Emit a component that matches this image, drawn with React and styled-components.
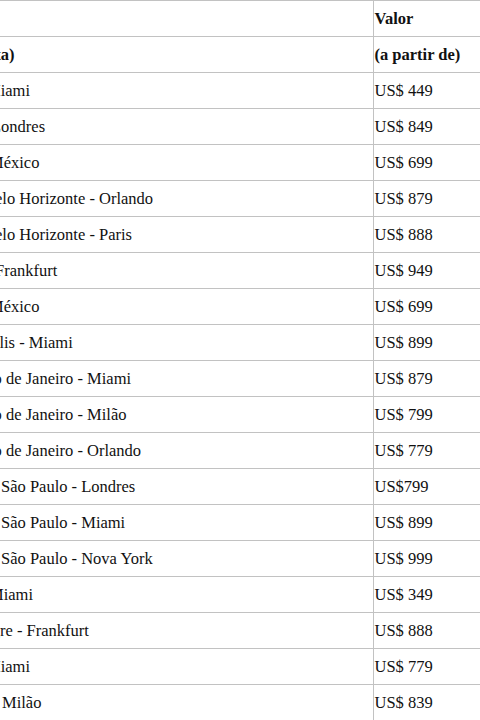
import styled, { createGlobalStyle } from "styled-components";

const GlobalStyle = createGlobalStyle`
  html, body {
    margin: 0;
    padding: 0;
    background: #ffffff;
    font-family: "Liberation Serif", "Times New Roman", serif;
  }
`;

const rows = [
  { route: "Miami", cut: -15, price: "US$ 449" },
  { route: "Londres", cut: -10, price: "US$ 849" },
  { route: "México", cut: -12, price: "US$ 699" },
  { route: "Belo Horizonte - Orlando", cut: -17, price: "US$ 879" },
  { route: "Belo Horizonte - Paris", cut: -17, price: "US$ 888" },
  { route: "Frankfurt", cut: -6, price: "US$ 949" },
  { route: "México", cut: -12, price: "US$ 699" },
  { route: "Florianópolis - Miami", cut: -74, price: "US$ 899" },
  { route: "Rio de Janeiro - Miami", cut: -23, price: "US$ 879" },
  { route: "Rio de Janeiro - Milão", cut: -23, price: "US$ 799" },
  { route: "Rio de Janeiro - Orlando", cut: -23, price: "US$ 779" },
  { route: "São Paulo - Londres", cut: 0, price: "US$799" },
  { route: "São Paulo - Miami", cut: 0, price: "US$ 899" },
  { route: "São Paulo - Nova York", cut: 0, price: "US$ 999" },
  { route: "Miami", cut: -12, price: "US$ 349" },
  { route: "Porto Alegre - Frankfurt", cut: -72, price: "US$ 888" },
  { route: "Miami", cut: -15, price: "US$ 779" },
  { route: "Milão", cut: 1, price: "US$ 839" },
];

export default function App() {
  return (
    <>
      <GlobalStyle />
      <Viewport>
        <Table>
          <colgroup>
            <col style={{ width: 373 }} />
            <col style={{ width: 200 }} />
          </colgroup>
          <tbody>
            <tr>
              <Cell />
              <Cell bold>Valor</Cell>
            </tr>
            <tr>
              <Cell bold cut={-70}>(ida e volta)</Cell>
              <Cell bold>(a partir de)</Cell>
            </tr>
            {rows.map((r, i) => (
              <tr key={i}>
                <Cell cut={r.cut}>{r.route}</Cell>
                <Cell>{r.price}</Cell>
              </tr>
            ))}
          </tbody>
        </Table>
      </Viewport>
    </>
  );
}

const Viewport = styled.div`
  width: 480px;
  height: 720px;
  overflow: hidden;
  background: #fff;
`;

const Table = styled.table`
  border-collapse: collapse;
  table-layout: fixed;
  width: 573px;
  color: #111;
`;

const Cell = styled.td`
  box-sizing: border-box;
  height: 36px;
  padding: 1px 0 0 1px;
  border: 1px solid #c2c2c2;
  border-left: none;
  vertical-align: middle;
  white-space: nowrap;
  overflow: hidden;
  font-family: "Liberation Serif", "Times New Roman", serif;
  font-size: 16.5px;
  font-weight: ${(p) => (p.bold ? 700 : 400)};
  text-indent: ${(p) => p.cut || 0}px;
`;
